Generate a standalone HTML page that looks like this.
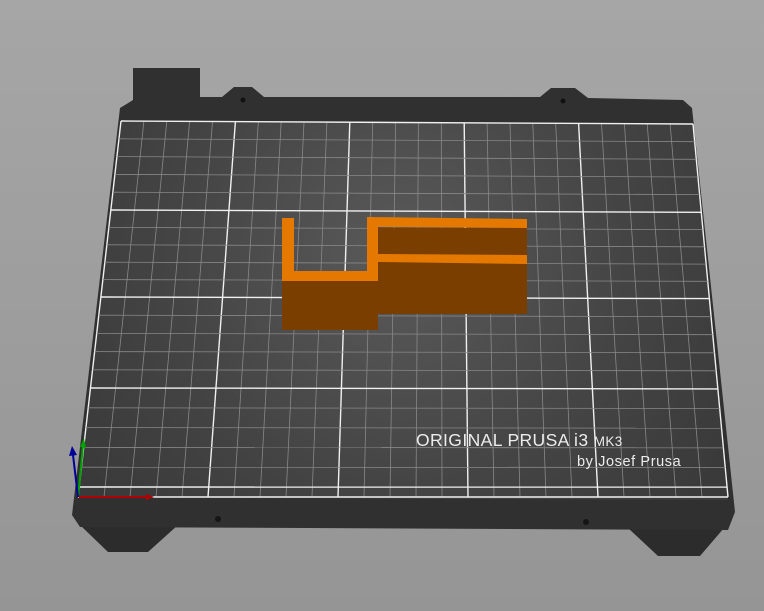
<!DOCTYPE html>
<html><head><meta charset="utf-8"><style>
html,body{margin:0;padding:0;}
body{width:764px;height:611px;overflow:hidden;background:linear-gradient(#a6a6a6,#959595);}
svg{display:block}
</style></head><body>
<svg id="s" width="764" height="611" viewBox="0 0 764 611" xmlns="http://www.w3.org/2000/svg">
<defs>
<radialGradient id="bg" cx="400" cy="260" r="380" gradientUnits="userSpaceOnUse">
<stop offset="0" stop-color="#5a5a5a"/><stop offset="0.6" stop-color="#444"/><stop offset="1" stop-color="#3a3a3a"/>
</radialGradient>
</defs>
<polygon points="80,525 178,525 148,552 108,552" fill="#2c2c2c"/>
<polygon points="628,528 724,528 700,556 658,556" fill="#2c2c2c"/>
<polygon points="133,68 200,68 200,97 222,97 234,87 252,87 264,97 540,97 551,88 575,88 588,98 683,100 692,108 735,512 728,530 80,527 72,515 120,108 133,100" fill="#303030"/>
<circle cx="243" cy="100" r="2.5" fill="#111"/>
<circle cx="563" cy="101" r="2.5" fill="#111"/>
<circle cx="218" cy="519" r="3" fill="#151515"/>
<circle cx="586" cy="522" r="3" fill="#151515"/>
<polygon points="121,121 693,124 728,500 78,497" fill="url(#bg)"/>
<g id="grid"></g>
<g>
<rect x="282" y="272" width="96" height="58" fill="#7a3f00"/>
<rect x="378" y="228" width="149" height="86" fill="#7a3f00"/>
<polygon points="282,218 294,218 294,271 367,271 367,217 527,219 527,228 378,227 378,254 527,255 527,264 378,262 378,281 282,281" fill="#e57900"/>
</g>
<text x="416" y="446" font-family="Liberation Sans, sans-serif" font-size="17.5" letter-spacing="0.4" fill="#ececec">ORIGINAL PRUSA i3 <tspan font-size="13.5">MK3</tspan></text>
<text x="577" y="466" font-family="Liberation Sans, sans-serif" font-size="14.5" letter-spacing="0.6" fill="#ececec">by Josef Prusa</text>
<line x1="79" y1="497" x2="148" y2="497" stroke="#b00000" stroke-width="2"/>
<polygon points="146,494 154,497 146,500" fill="#b00000"/>
<line x1="78" y1="497" x2="83" y2="446" stroke="#00a000" stroke-width="2"/>
<polygon points="80,447 84,438 86,448" fill="#00a000"/>
<line x1="78" y1="497" x2="73" y2="455" stroke="#00009a" stroke-width="2"/>
<polygon points="69,456 72,446 77,455" fill="#00009a"/>
</svg>
<script>
(function(){
var g=document.getElementById('grid');
var ym=[[0,497],[10,487],[60,388],[110,297],[160,210],[210,121]];
function Y(t){for(var i=0;i<ym.length-1;i++){var a=ym[i],b=ym[i+1];if(t<=b[0]){return a[1]+(b[1]-a[1])*(t-a[0])/(b[0]-a[0]);}}return 121;}
function P(u,t){var y=Y(t);var f=(497-y)/376;var xl=78+(121-78)*f,xr=728+(693-728)*f;var yr=y+(3*f);return [xl+(xr-xl)*u/250, y+(yr-y)*u/250];}
var h='';
function L(a,b,maj){h+='<line x1="'+a[0].toFixed(1)+'" y1="'+a[1].toFixed(1)+'" x2="'+b[0].toFixed(1)+'" y2="'+b[1].toFixed(1)+'" stroke="'+(maj?'#f0f0f0':'#888')+'" stroke-width="'+(maj?1.4:0.8)+'"/>';}
for(var u=0;u<=250;u+=10){L(P(u,0),P(u,210),u%50==0);}
for(var t=0;t<=210;t+=10){L(P(0,t),P(250,t),(t-10)%50==0||t==0||t==210);}
g.innerHTML=h;
})();
</script>
</body></html>
